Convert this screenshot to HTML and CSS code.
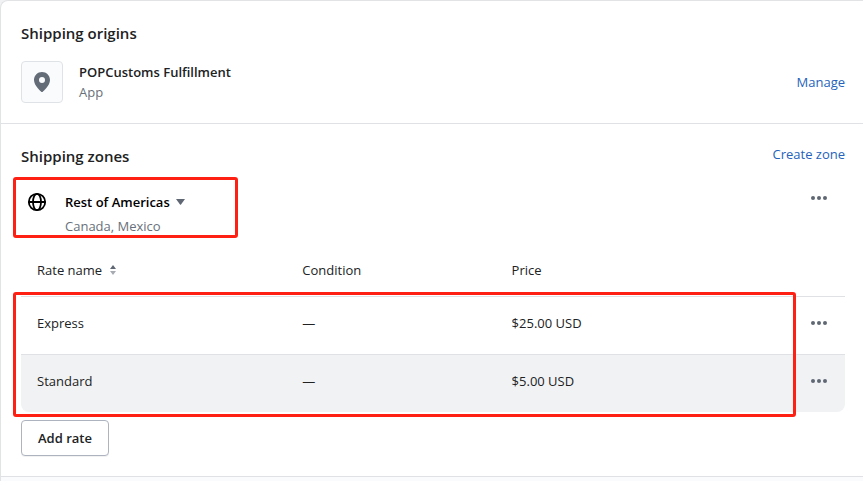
FILE: index.html
```html
<!DOCTYPE html>
<html lang="en">
<head>
    <meta charset="UTF-8">
    <title>Shipping profile</title>
    <meta name="viewport" content="width=device-width, initial-scale=1.0">
    <link rel="stylesheet" href="styles.css">
</head>
<body>
    <main class="card">
        <section class="section">
            <h2>Shipping origins</h2>
            <div class="origin">
                <div class="thumb">
                    <svg width="20" height="20" viewBox="0 0 20 20" fill="#646c77">
                        <path fill-rule="evenodd" d="M10 0C5.600 0 2 3.500 2 8c0 5.600 6.800 11.400 7.200 11.700.5.4 1.100.4 1.600 0C11.200 19.400 18 13.600 18 8c0-4.500-3.600-8-8-8zm0 11a3 3 0 1 1 0-6 3 3 0 0 1 0 6z"/>
                    </svg>
                </div>
                <div class="origin-text">
                    <div class="name">POPCustoms Fulfillment</div>
                    <div class="subdued">App</div>
                </div>
                <a href="#" class="link">Manage</a>
            </div>
        </section>

        <section class="section">
            <div class="section-header">
                <h2>Shipping zones</h2>
                <a href="#" class="link">Create zone</a>
            </div>

            <div class="zone">
                <svg class="globe" width="20" height="20" viewBox="0 0 20 20" fill="none" stroke="#000" stroke-width="1.8">
                    <circle cx="10" cy="10" r="8.200"/>
                    <ellipse cx="10" cy="10" rx="4" ry="8.200"/>
                    <path d="M2 10h16"/>
                </svg>
                <div class="zone-text">
                    <button type="button" class="zone-name">
                        Rest of Americas
                        <svg width="9" height="6" viewBox="0 0 9 6"><path fill="#5f6773" d="M0 0h9L5 5.500q-.5.500-1 0z"/></svg>
                    </button>
                    <div class="subdued">Canada, Mexico</div>
                </div>
                <button type="button" class="more" aria-label="Zone actions">
                    <svg width="16" height="4" viewBox="0 0 16 4" fill="#5f6773"><circle cx="2" cy="2" r="2"/><circle cx="8" cy="2" r="2"/><circle cx="14" cy="2" r="2"/></svg>
                </button>
                <div class="highlight highlight-zone"></div>
            </div>

            <div class="rates">
                <table>
                    <thead>
                        <tr>
                            <th class="col-name">
                                <button type="button" class="sort">
                                    Rate name
                                    <svg width="8" height="10" viewBox="0 0 8 10"><path fill="#5f6773" d="M1 4L4 0l3 4z"/><path fill="#a6abb2" d="M1 6h6l-3 4z"/></svg>
                                </button>
                            </th>
                            <th class="col-condition">Condition</th>
                            <th>Price</th>
                            <th class="col-actions"></th>
                        </tr>
                    </thead>
                    <tbody>
                        <tr>
                            <td>Express</td>
                            <td>—</td>
                            <td>$25.00 USD</td>
                            <td class="col-actions">
                                <button type="button" class="more" aria-label="Express actions">
                                    <svg width="16" height="4" viewBox="0 0 16 4" fill="#5f6773"><circle cx="2" cy="2" r="2"/><circle cx="8" cy="2" r="2"/><circle cx="14" cy="2" r="2"/></svg>
                                </button>
                            </td>
                        </tr>
                        <tr class="active">
                            <td>Standard</td>
                            <td>—</td>
                            <td>$5.00 USD</td>
                            <td class="col-actions">
                                <button type="button" class="more" aria-label="Standard actions">
                                    <svg width="16" height="4" viewBox="0 0 16 4" fill="#5f6773"><circle cx="2" cy="2" r="2"/><circle cx="8" cy="2" r="2"/><circle cx="14" cy="2" r="2"/></svg>
                                </button>
                            </td>
                        </tr>
                    </tbody>
                </table>
                <div class="highlight highlight-rates"></div>
            </div>

            <button type="button" class="add-rate">Add rate</button>
        </section>

        <div class="next-section"></div>
    </main>
</body>
</html>
```

FILE: styles.css
```css
* {
    box-sizing: border-box;
}
body {
    margin: 0;
    background: #f1f2f4;
    color: #202223;
    font-family: "Segoe UI", "Open Sans", "Noto Sans", sans-serif;
    font-size: 13px;
    line-height: 20px;
}
button {
    padding: 0;
    border: none;
    background: none;
    color: inherit;
    font: inherit;
    cursor: pointer;
}
svg {
    display: block;
}
.card {
    display: flex;
    flex-direction: column;
    min-height: 100vh;
    overflow: hidden;
    background: #fff;
    border: 1px solid #e1e3e5;
    border-width: 1px 0 0 1px;
    border-radius: 8px 0 0 0;
}
.section {
    padding: 20px 18px 20px 20px;
    border-bottom: 1px solid #dfe1e4;
}
h2 {
    margin: 0;
    font-size: 15px;
    font-weight: 600;
    line-height: 24px;
}
.name,
.zone-name {
    font-weight: 600;
}
.subdued {
    color: #68707a;
}
.link {
    color: #2463bc;
    text-decoration: none;
}
.link:hover {
    text-decoration: underline;
}

/* origins */
.origin {
    display: flex;
    align-items: center;
    gap: 16px;
    margin-top: 16px;
}
.thumb {
    display: flex;
    align-items: center;
    justify-content: center;
    width: 42px;
    height: 42px;
    background: #fafbfc;
    border: 1px solid #dfe3e8;
    border-radius: 4px;
}
.origin-text {
    flex: 1;
}

/* zones */
.section-header {
    display: flex;
    align-items: flex-start;
    justify-content: space-between;
}
.zone {
    position: relative;
    display: flex;
    gap: 18px;
    padding: 24px 16px 0 6px;
}
.zone-text {
    flex: 1;
}
.zone-name {
    display: flex;
    align-items: center;
    gap: 6px;
    margin-bottom: 4px;
    color: #000;
}
.more {
    display: flex;
    align-items: center;
    justify-content: center;
    width: 20px;
    height: 12px;
}
.rates {
    position: relative;
    margin-top: 8px;
}
table {
    width: 100%;
    border-spacing: 0;
    table-layout: fixed;
}
th,
td {
    padding: 0 16px;
    text-align: left;
    font-weight: 400;
}
th {
    height: 52px;
}
td {
    height: 58px;
    padding-bottom: 6px;
    border-top: 1px solid #dfe1e4;
}
.col-name {
    width: 32.2%;
}
.col-condition {
    width: 25.4%;
}
.col-actions {
    width: 52px;
}
.active td {
    background: #f1f2f4;
}
.active td:first-child {
    border-bottom-left-radius: 8px;
}
.active td:last-child {
    border-bottom-right-radius: 8px;
}
.sort {
    display: flex;
    align-items: center;
    gap: 7px;
}
.add-rate {
    display: block;
    height: 36px;
    margin-top: 8px;
    padding: 0 16px;
    background: #fff;
    border: 1px solid #aeb4bf;
    border-radius: 4px;
    box-shadow: 0 1px 0 rgba(0, 0, 0, 0.05);
    font-weight: 600;
}
.next-section {
    flex: 1;
    background: #fafbfc;
}

/* red outlines */
.highlight {
    position: absolute;
    border: 3px solid #ff2014;
    border-radius: 3px;
    pointer-events: none;
}
.highlight-zone {
    top: 9px;
    left: -8px;
    width: 225px;
    height: 61px;
}
.highlight-rates {
    top: 48px;
    right: 49px;
    bottom: -5px;
    left: -8px;
}
```
